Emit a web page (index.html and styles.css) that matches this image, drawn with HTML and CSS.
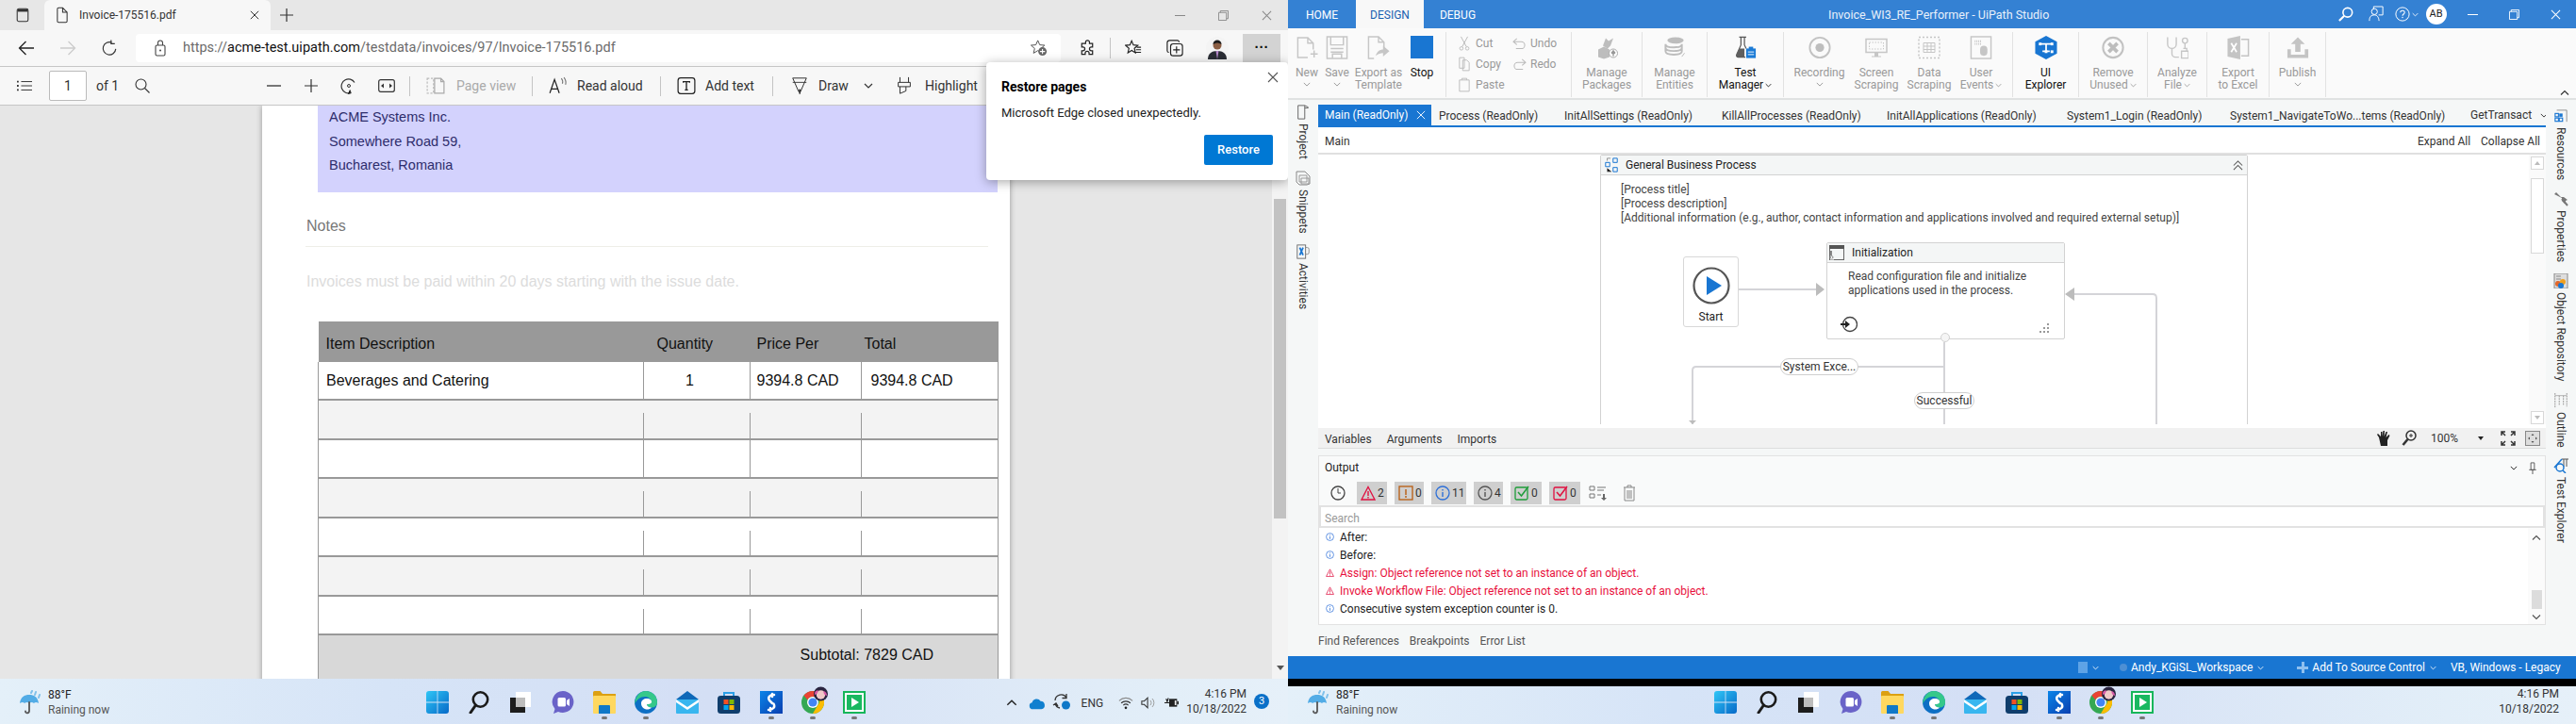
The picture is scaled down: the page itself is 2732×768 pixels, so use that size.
FILE: index.html
```html
<!DOCTYPE html>
<html lang="en">
<head>
<meta charset="utf-8">
<title>Edge and UiPath Studio</title>
<link rel="stylesheet" href="styles.css">
</head>
<body>
<svg class="sprite" aria-hidden="true">
  <defs>
    <linearGradient id="g-win" x1="0" y1="0" x2="1" y2="1"><stop offset="0" stop-color="#2fc6f6"/><stop offset="1" stop-color="#0669c8"/></linearGradient>
    <linearGradient id="g-sbg" x1="0" y1="0" x2="1" y2="1"><stop offset="0" stop-color="#0a84e8"/><stop offset="1" stop-color="#0a3fb0"/></linearGradient>
  </defs>
  <symbol id="win" viewBox="0 0 24 24"><path fill="url(#g-win)" d="M0 3a3 3 0 0 1 3-3h8.6v11.6H0zM12.4 0H21a3 3 0 0 1 3 3v8.6H12.4zM0 12.4h11.6V24H3a3 3 0 0 1-3-3zM12.4 12.4H24V21a3 3 0 0 1-3 3h-8.6z"/></symbol>
  <symbol id="tsearch" viewBox="0 0 24 24"><circle cx="13.5" cy="9" r="7.7" fill="none" stroke="#1b1b1b" stroke-width="2.6"/><path d="M8.5 15 3 23" stroke="#1b1b1b" stroke-width="3" stroke-linecap="round"/></symbol>
  <symbol id="taskview" viewBox="0 0 24 24"><rect x="1" y="7" width="16" height="16" fill="#1d1d1d"/><rect x="7" y="1" width="16" height="16" fill="#fff"/><rect x="7" y="7" width="10" height="10" fill="#bdbdbd"/></symbol>
  <symbol id="teams" viewBox="0 0 24 24"><path fill="#6a63c8" d="M12 0a11.5 11.5 0 1 1-5 21.9L2 24l1.5-5A11.5 11.5 0 0 1 12 0z"/><rect x="6.5" y="7" width="8.5" height="9.5" rx="1.5" fill="#fff"/><path d="m16 10 3-2v8l-3-2z" fill="#fff"/></symbol>
  <symbol id="files" viewBox="0 0 24 24"><path fill="#dca012" d="M0 1.5A1.5 1.5 0 0 1 1.5 0h6L10 3h14v3H0z"/><rect y="5" width="24" height="19" rx="1" fill="#ffd860"/><path fill="#0f78c8" d="M7 15h10a1 1 0 0 1 1 1v8H6v-8a1 1 0 0 1 1-1z"/></symbol>
  <symbol id="edge" viewBox="0 0 24 24"><circle cx="12" cy="12" r="12" fill="#0d6fc4"/><path fill="#35c88a" d="M12 0a12 12 0 0 1 12 12c0 3.500-2.500 5.500-6 5.500-3 0-5-1.500-5-3.500 3 0 4.500-1 4.500-2.800 0-3-3-5.200-6.500-5.200-5 0-9 3.500-11 8C.5 6 5.500 0 12 0z"/><path fill="#fff" d="M7 13c0-3 3-5 6-5 3.500 0 5.500 2 5 4-.5 1.500-2 2-5 2 0 2 2 3.500 5 3.500-1 1.500-3 2-4.500 2C10 19.500 7 17 7 13z"/></symbol>
  <symbol id="mail" viewBox="0 0 24 24"><path fill="#0f68b8" d="M12 0 24 9v3H0V9z"/><rect y="9" width="24" height="15" rx="1" fill="#38b6ef"/><path fill="#fff" d="m0 9 12 8 12-8v3l-12 8L0 12z"/></symbol>
  <symbol id="store" viewBox="0 0 24 24"><path fill="none" stroke="#2ba0e8" stroke-width="2" d="M7 6V2h10v4"/><rect y="5" width="24" height="19" rx="3.500" fill="#0f3d6c"/><rect x="6.500" y="9" width="5" height="5" fill="#f25022"/><rect x="12.500" y="9" width="5" height="5" fill="#7fba00"/><rect x="6.500" y="15" width="5" height="5" fill="#00a4ef"/><rect x="12.500" y="15" width="5" height="5" fill="#ffb900"/></symbol>
  <symbol id="sapp" viewBox="0 0 24 24"><rect width="24" height="24" fill="url(#g-sbg)"/><path fill="none" stroke="#fff" stroke-width="2.500" stroke-linecap="round" d="M15 4C10 4 8 7 10 10l3 3M13 3v3M9 20c5 0 7.500-3 5.500-6.500M11 18v3"/></symbol>
  <symbol id="chrome" viewBox="0 0 24 24"><circle cx="12" cy="12" r="12" fill="#34a853"/><path fill="#ea4335" d="M12 0a12 12 0 0 1 10.400 6H12a6 6 0 0 0-5.600 3.500L2.500 4.700A12 12 0 0 1 12 0z"/><path fill="#fbbc04" d="M22.400 6A12 12 0 0 1 12 24l5.200-9a6 6 0 0 0 0-9z"/><circle cx="12" cy="12" r="6" fill="#fff"/><circle cx="12" cy="12" r="4.600" fill="#4285f4"/></symbol>
  <symbol id="badge" viewBox="0 0 16 16"><circle cx="8" cy="8" r="8" fill="#2a2440"/><circle cx="8" cy="9" r="5" fill="#f1c8c8"/><path fill="#d95aa8" d="M1 9c0-4 2-5 4-5 0 3-2 5-4 5zM15 10c0-3-2-5-4-5 0 3 2 5 4 5z"/></symbol>
  <symbol id="green" viewBox="0 0 24 24"><rect width="24" height="24" fill="#16b65a"/><rect x="2" y="2" width="20" height="20" fill="#fff"/><rect x="4" y="4" width="16" height="16" fill="#19b860"/><path fill="#fff" d="m9 7 8 5-8 5z"/></symbol>
  <symbol id="rain" viewBox="0 0 24 26"><path fill="#52ace6" d="M1 14C2 7 6 5 11 5c5 0 9 2 10 9-2-1.500-4-1.500-5 0-1.500-1.500-3.500-1.500-5 0-1.500-1.500-3.500-1.500-5 0-1-1.500-3-1.500-5 0z"/><path fill="none" stroke="#555" stroke-width="1.800" stroke-linecap="round" d="M11 13v9c0 3-4 3-4 .5"/><path stroke="#7fc0ea" stroke-width="2" stroke-linecap="round" d="M14 1l-1 2M18 2l-1 3M22 5l-1 3"/></symbol>
  <symbol id="cloud" viewBox="0 0 20 14"><path fill="#0f7fcf" d="M5 13.500a4 4 0 0 1-1-7.900A5.500 5.500 0 0 1 14 4a4.800 4.800 0 0 1 1 9.500z"/></symbol>
  <symbol id="sync" viewBox="0 0 20 20"><path fill="none" stroke="#333" stroke-width="1.300" d="M3 9a6.500 6.500 0 0 1 12-3M8 17A6.500 6.500 0 0 1 3 12M15 2v4.500h-4.500M1 14l3-2 2 3"/><circle cx="14.500" cy="14" r="4.500" fill="#0f78c8"/></symbol>
  <symbol id="wifi" viewBox="0 0 18 16"><path fill="none" stroke="#8a8a8a" stroke-width="1.200" d="M1 5.500a11.500 11.500 0 0 1 16 0"/><path fill="none" stroke="#333" stroke-width="1.300" d="M3.500 8.300a8 8 0 0 1 11 0M6 11a4.500 4.500 0 0 1 6 0"/><circle cx="9" cy="14" r="1.500" fill="#222"/></symbol>
  <symbol id="vol" viewBox="0 0 18 16"><path fill="none" stroke="#333" stroke-width="1.200" d="M1 6v4h3l4 4V2L4 6z"/><path fill="none" stroke="#999" stroke-width="1.100" d="M11 5a4 4 0 0 1 0 6M13.500 3a7 7 0 0 1 0 10"/></symbol>
  <symbol id="batt" viewBox="0 0 18 16"><rect x="6" y="3" width="10" height="10" fill="#222"/><rect x="16" y="6" width="2" height="4" fill="#222"/><rect x="13" y="5" width="2" height="6" fill="#eee"/><path stroke="#222" stroke-width="1.400" d="M0 8h6M2 3l2 4M5 2 3 8"/></symbol>
  <symbol id="vtabs" viewBox="0 0 16 18"><rect x="1.500" y="1.500" width="13" height="15" rx="2" fill="none" stroke="#333" stroke-width="1.200"/><path d="M2 2h12v3H2z" fill="#333"/></symbol>
  <symbol id="file" viewBox="0 0 14 20"><path fill="none" stroke="#333" stroke-width="1.200" d="M1 2.500A1.500 1.500 0 0 1 2.500 1h5L13 6.500v11a1.500 1.500 0 0 1-1.500 1.500h-9A1.500 1.500 0 0 1 1 17.500zM7.500 1v5.500H13"/></symbol>
  <symbol id="x" viewBox="0 0 12 12"><path stroke="currentColor" fill="none" stroke-width="1.100" d="M1 1l10 10M11 1 1 11"/></symbol>
  <symbol id="plus" viewBox="0 0 16 16"><path stroke="#333" fill="none" stroke-width="1.200" d="M8 1v14M1 8h14"/></symbol>
  <symbol id="back" viewBox="0 0 18 18"><path stroke="currentColor" fill="none" stroke-width="1.300" d="M17 9H1.500M8.500 2 1.500 9l7 7"/></symbol>
  <symbol id="fwd" viewBox="0 0 18 18"><path stroke="currentColor" fill="none" stroke-width="1.300" d="M1 9h15.500M9.500 2l7 7-7 7"/></symbol>
  <symbol id="reload" viewBox="0 0 18 20"><path stroke="#333" fill="none" stroke-width="1.300" d="M12 3.500A7.500 7.500 0 1 0 16.500 11M11 0.500v4.300h4.400"/></symbol>
  <symbol id="lock" viewBox="0 0 12 18"><rect x="1" y="6" width="10" height="11" rx="1.500" fill="none" stroke="#444" stroke-width="1.100"/><path fill="none" stroke="#444" stroke-width="1.100" d="M3.500 6V3.500a2.500 2.500 0 0 1 5 0V6"/><circle cx="6" cy="11.500" r="1" fill="#444"/></symbol>
  <symbol id="staradd" viewBox="0 0 20 20"><path fill="none" stroke="#555" stroke-width="1.100" d="M8.500 1l2.300 5.200 5.700.5-4.300 3.800 1.300 5.500-5-3-5 3 1.300-5.500L.5 6.700l5.700-.5z"/><circle cx="14" cy="14" r="5" fill="#666"/><path stroke="#fff" stroke-width="1.200" d="M14 11v6M11 14h6"/></symbol>
  <symbol id="ext" viewBox="0 0 20 22"><path fill="none" stroke="#222" stroke-width="1.500" d="M8 3.500a2.500 2.500 0 0 1 5 0V5h4v4.500h-1.500a2.500 2.500 0 0 0 0 5H17V19h-4.500v-1.500a2.500 2.500 0 0 0-5 0V19H3v-4.500h1.500a2.500 2.500 0 0 0 0-5H3V5h5z"/></symbol>
  <symbol id="favs" viewBox="0 0 20 20"><path fill="none" stroke="#222" stroke-width="1.300" d="M8 1.500l2 4.800 5.200.5-4 3.500 1.200 5.200L8 12.800 3.600 15.500l1.200-5.200-4-3.500L6 6.300z"/><path stroke="#222" stroke-width="1.200" d="M14 9h5M13 12h6M12 15h7"/></symbol>
  <symbol id="coll" viewBox="0 0 20 20"><rect x="5" y="5" width="14" height="14" rx="3" fill="none" stroke="#222" stroke-width="1.300"/><path fill="none" stroke="#222" stroke-width="1.300" d="M15 3A2 2 0 0 0 13 1H4a3 3 0 0 0-3 3v9a2 2 0 0 0 2 2M12 8v8M8 12h8"/></symbol>
  <symbol id="avatar" viewBox="0 0 24 24"><circle cx="12" cy="12" r="12" fill="#f4f4f4"/><path fill="#2a2d35" d="M2 24c0-6 4-9 10-9s10 3 10 9z"/><path fill="#b488c8" d="m10.500 15 1.500 9 1.500-9z"/><circle cx="12" cy="9" r="4.500" fill="#8b5e44"/><path fill="#1c1c1c" d="M7.500 8c0-6 9-6 9 0-3-2-6-2-9 0z"/></symbol>
  <symbol id="list" viewBox="0 0 18 14"><path stroke="#333" stroke-width="1.100" d="M5 2h13M5 7h13M5 12h13"/><path stroke="#333" stroke-width="2" stroke-dasharray="2" d="M0 2h2M0 7h2M0 12h2"/></symbol>
  <symbol id="mag" viewBox="0 0 16 16"><circle cx="6.500" cy="6.500" r="5.500" fill="none" stroke="#333" stroke-width="1.100"/><path stroke="#333" stroke-width="1.100" d="m10.500 10.500 5 5"/></symbol>
  <symbol id="rot" viewBox="0 0 18 18"><path fill="none" stroke="#333" stroke-width="1.200" d="M11 16.500A7.500 7.500 0 1 1 15 5.500"/><circle cx="9" cy="9" r="1.500" fill="none" stroke="#333"/><path stroke="#333" stroke-width="1.200" d="m8 17.500 3-1-1-3"/></symbol>
  <symbol id="fit" viewBox="0 0 18 14"><rect x=".7" y=".7" width="16.600" height="12.600" rx="2" fill="none" stroke="#333" stroke-width="1.200"/><path fill="#333" d="M3 7l3-2.500v5zM15 7l-3-2.500v5z"/></symbol>
  <symbol id="pageview" viewBox="0 0 18 18"><path fill="none" stroke="#bbb" stroke-width="1.100" stroke-dasharray="2 1.500" d="M1 2h6v14H1z"/><path fill="none" stroke="#aaa" stroke-width="1.100" d="M8 2h6l3 3v11H8zM14 2v3h3"/></symbol>
  <symbol id="read" viewBox="0 0 18 18"><path fill="none" stroke="#222" stroke-width="1.100" d="m1 16 4.500-13L10 16M2.500 12h6"/><path fill="none" stroke="#777" stroke-width="1" d="M12 2a5 5 0 0 1 1 5M14.500 1a8 8 0 0 1 1.500 7"/></symbol>
  <symbol id="addt" viewBox="0 0 18 18"><rect x="1" y="1.500" width="16" height="15" rx="2.500" fill="none" stroke="#222" stroke-width="1.100"/><path fill="none" stroke="#222" stroke-width="1.200" d="M6 6V5h6v1M9 5v8M7.500 13h3"/></symbol>
  <symbol id="draw" viewBox="0 0 18 22"><path fill="none" stroke="#333" stroke-width="1.100" d="M1 2h16L10 18H8z"/><path fill="#333" d="M8 15h2.500L10 20.500H8.500z"/><path stroke="#333" d="M1 7h16"/></symbol>
  <symbol id="high" viewBox="0 0 16 22"><path fill="none" stroke="#333" stroke-width="1.100" d="M3 1v6M13 1v6M1 7h14v5H1zM3 12v8l7-3v-5"/></symbol>
  <symbol id="chev" viewBox="0 0 10 6"><path fill="none" stroke="currentColor" stroke-width="1.200" d="m1 1 4 4 4-4"/></symbol>
  <symbol id="chevup" viewBox="0 0 10 6"><path fill="none" stroke="currentColor" stroke-width="1.200" d="m1 5 4-4 4 4"/></symbol>
  <symbol id="r-new" viewBox="0 0 24 26"><path fill="none" stroke="#c6c6c6" stroke-width="1.500" d="M13 24H2V2h11l6 6v7M13 2v6h6M16 20h8M20 16v8"/></symbol>
  <symbol id="r-save" viewBox="0 0 24 26"><path fill="none" stroke="#c6c6c6" stroke-width="1.500" d="M1 1h22v24H1zM5 1v9h14V1M5 14h14M5 18h14M7 25v-5h10v5"/></symbol>
  <symbol id="r-exp" viewBox="0 0 24 26"><path fill="none" stroke="#c6c6c6" stroke-width="1.500" d="M7 25H1V1h11l6 6v6M12 1v6h6"/><path fill="#c6c6c6" d="M9 22c1-5 5-7 8-7v-4l7 6-7 6v-4c-3 0-5 1-8 3z"/></symbol>
  <symbol id="r-cut" viewBox="0 0 12 18"><path fill="none" stroke="#bbb" stroke-width="1.100" d="M2 1l6.500 12M10 1 3.500 13"/><circle cx="2.500" cy="15" r="2" fill="none" stroke="#bbb"/><circle cx="9.500" cy="15" r="2" fill="none" stroke="#bbb"/></symbol>
  <symbol id="r-copy" viewBox="0 0 14 18"><path fill="none" stroke="#bbb" stroke-width="1.100" d="M1 1h6v13H1zM5 4h5l3 3v10H5z"/></symbol>
  <symbol id="r-paste" viewBox="0 0 14 18"><path fill="none" stroke="#bbb" stroke-width="1.100" d="M1 3h12v14H1zM4 3V1h6v2"/></symbol>
  <symbol id="r-undo" viewBox="0 0 16 14"><path fill="none" stroke="#bbb" stroke-width="1.100" d="M5 1 1 4.500 5 8M1 4.500h9a4 4 0 0 1 0 8H4"/></symbol>
  <symbol id="r-redo" viewBox="0 0 16 14"><path fill="none" stroke="#bbb" stroke-width="1.100" d="M11 1l4 3.500L11 8M15 4.500H6a4 4 0 0 0 0 8h6"/></symbol>
  <symbol id="r-pkg" viewBox="0 0 24 24"><path fill="#bdbdbd" d="M3 14l6-3 6 3v8l-6 2-6-2zM8 10l3-8 3 3 5-3-3 8-3 3z"/><circle cx="19" cy="18" r="4.500" fill="#fff" stroke="#aaa"/><path stroke="#999" stroke-width="1.500" d="M19 21v-5M17 18l2-2.500 2 2.500"/></symbol>
  <symbol id="r-db" viewBox="0 0 24 26"><ellipse cx="13" cy="5" rx="9" ry="3.500" fill="#bdbdbd"/><path fill="none" stroke="#bdbdbd" stroke-width="2" d="M2 9c0 5 18 5 18 0M2 13c0 5 18 5 18 0M2 17c0 5 18 5 18 0M2 9v8M20 9v8"/><path stroke="#bbb" d="m20 23 3-4"/></symbol>
  <symbol id="r-flask" viewBox="0 0 26 26"><path fill="none" stroke="#555" stroke-width="1.300" d="M6 1h8M8 1v9L3 21c-.5 2 .5 3 2 3h8"/><path fill="#5f5f5f" d="M6 14h6v10H5c-2 0-3-1-2-3z"/><path fill="none" stroke="#555" stroke-width="1.300" d="M12 1v9l2 4"/><rect x="14" y="14" width="11" height="11" fill="#1b7bd6"/><path stroke="#fff" d="M16 18h7M16 21h7"/><rect x="17" y="12" width="5" height="3" fill="#1b7bd6"/></symbol>
  <symbol id="r-rec" viewBox="0 0 26 26"><circle cx="13" cy="13" r="11.500" fill="none" stroke="#c2c2c2" stroke-width="2"/><circle cx="13" cy="13" r="5" fill="#bdbdbd"/></symbol>
  <symbol id="r-screen" viewBox="0 0 24 24"><rect x="1" y="3" width="22" height="14" fill="none" stroke="#c6c6c6" stroke-width="1.500"/><rect x="4.500" y="6.500" width="15" height="7" fill="none" stroke="#c6c6c6" stroke-dasharray="1.500"/><path fill="#c6c6c6" d="M10 17h4v4h3v1H7v-1h3z"/></symbol>
  <symbol id="r-data" viewBox="0 0 24 24"><rect x="1" y="1" width="22" height="22" fill="none" stroke="#c6c6c6" stroke-width="1.500" stroke-dasharray="2"/><path fill="none" stroke="#c6c6c6" d="M6 7h12v10H6zM6 10.500h12M6 14h12M10 7v10M14 7v10"/></symbol>
  <symbol id="r-user" viewBox="0 0 24 26"><rect x="1" y="1" width="22" height="24" fill="none" stroke="#c6c6c6" stroke-width="1.500"/><rect x="11" y="11" width="8" height="11" rx="4" fill="#c6c6c6"/><path stroke="#c6c6c6" stroke-width="2" stroke-dasharray="1 1" d="M5 6h7M5 9h7"/></symbol>
  <symbol id="r-ui" viewBox="0 0 24 26"><path fill="#1976d2" d="M12 0 24 6.500v13L12 26 0 19.500v-13z"/><path stroke="#fff" stroke-width="1.800" fill="none" d="M5 9h14M12 9v8M8 17h8"/><rect x="4" y="7.500" width="3" height="3" fill="#fff"/><rect x="17" y="7.500" width="3" height="3" fill="#fff"/><rect x="10.500" y="16" width="3" height="3" fill="#fff"/><rect x="17" y="16" width="3" height="3" fill="#fff"/></symbol>
  <symbol id="r-rem" viewBox="0 0 26 26"><circle cx="13" cy="13" r="11.500" fill="none" stroke="#c2c2c2" stroke-width="2.200"/><path stroke="#bdbdbd" stroke-width="4" d="m8 8 10 10M18 8 8 18"/></symbol>
  <symbol id="r-an" viewBox="0 0 26 26"><path fill="none" stroke="#c6c6c6" stroke-width="1.500" d="M2 1v8a5 5 0 0 0 10 0V1M7 14v6a4 4 0 0 0 4 4h4M22 8v6"/><circle cx="22" cy="5" r="3" fill="none" stroke="#c6c6c6" stroke-width="1.500"/><path fill="none" stroke="#c6c6c6" stroke-width="1.500" d="M18 17h8v8h-8zM20 14h4v3"/></symbol>
  <symbol id="r-xl" viewBox="0 0 24 26"><path fill="#c4c4c4" d="M0 3 14 0v26L0 23z"/><path fill="none" stroke="#c4c4c4" stroke-width="1.600" d="M15 4h8v18h-8"/><path stroke="#fff" stroke-width="1.800" d="m4 8 6 10M10 8 4 18"/></symbol>
  <symbol id="r-pub" viewBox="0 0 26 24"><path fill="#c4c4c4" d="M13 0 21 8h-5v9h-6V8H5zM1 14h4v6h16v-6h4v10H1z"/></symbol>
  <symbol id="t-search" viewBox="0 0 18 18"><circle cx="11" cy="7" r="5.500" fill="none" stroke="#fff" stroke-width="1.800"/><path stroke="#fff" stroke-width="2.400" d="m7 11-6 6"/></symbol>
  <symbol id="t-feed" viewBox="0 0 18 20"><path fill="none" stroke="#fff" stroke-width="1.100" d="M6 4V1h11v10h-5"/><circle cx="7" cy="7" r="3.500" fill="none" stroke="#fff" stroke-width="1.100"/><path fill="none" stroke="#fff" stroke-width="1.100" d="M1 18c0-5 2-7 6-7 3 0 5 2 5.500 7"/></symbol>
  <symbol id="t-help" viewBox="0 0 18 18"><circle cx="9" cy="9" r="8" fill="none" stroke="#fff" stroke-width="1.100"/><path fill="none" stroke="#fff" stroke-width="1.200" d="M6.500 7c0-3 5-3 5 0 0 2-2.500 2-2.500 4"/><circle cx="9" cy="13" r=".8" fill="#fff"/></symbol>
  <symbol id="t-max" viewBox="0 0 12 12"><path fill="none" stroke="currentColor" d="M.5 2.500h9v9h-9zM2.500 2.500v-2h9v9h-2"/></symbol>
  <symbol id="s-proj" viewBox="0 0 14 18"><path fill="none" stroke="#666" stroke-width="1.100" d="M1 1h8v16H1zM9 1l4 2v1H9"/></symbol>
  <symbol id="s-snip" viewBox="0 0 16 16"><path fill="none" stroke="#888" d="M1 1h9l5 5v8l-3 1H4L1 12z"/><path fill="none" stroke="#999" d="M4 5h8v7H4zM6 8h8v6H6z"/></symbol>
  <symbol id="s-act" viewBox="0 0 16 18"><rect x="1" y="1" width="10" height="16" fill="none" stroke="#666"/><path stroke="#1976d2" stroke-width="2" d="M4 4l4 9M8 4l-4 9"/><path fill="none" stroke="#888" d="M11 4h2a2 2 0 0 1 2 2v4a2 2 0 0 1-2 2h-2"/></symbol>
  <symbol id="s-res" viewBox="0 0 16 16"><path fill="none" stroke="#888" d="M3 1h12v14"/><rect x="1" y="5" width="4" height="4" fill="none" stroke="#1976d2" stroke-width="1.300"/><rect x="6" y="5" width="4" height="4" fill="#1976d2"/><rect x="1" y="10.500" width="4" height="4" fill="none" stroke="#1976d2" stroke-width="1.300"/><rect x="6" y="10.500" width="4" height="4" fill="none" stroke="#1976d2" stroke-width="1.300"/></symbol>
  <symbol id="s-prop" viewBox="0 0 16 16"><path fill="#777" d="M1 3l2-2 5 5 3 0 4 3-2 1-1 3-3-3 0-3z"/><path stroke="#777" stroke-width="2" d="M9 8l6 7"/></symbol>
  <symbol id="s-obj" viewBox="0 0 16 16"><rect x="1" y="0" width="14" height="16" fill="#ddd" stroke="#888"/><path stroke="#888" d="M3 3h5M3 6h5M3 9h2"/><circle cx="5" cy="11" r="3" fill="#e5682a"/><circle cx="10" cy="9" r="3" fill="#f0a020"/><circle cx="8" cy="13" r="3" fill="#1976d2"/></symbol>
  <symbol id="s-out" viewBox="0 0 16 18"><path stroke="#888" stroke-dasharray="2 1" d="M1 0v18M6 3v12M11 3v12M15 0v16"/><path stroke="#aaa" d="M1 3h14"/></symbol>
  <symbol id="s-test" viewBox="0 0 16 16"><path fill="none" stroke="#555" d="M9 1h7M11 1v8M14 1v8"/><circle cx="7" cy="10" r="4" fill="none" stroke="#1976d2" stroke-width="1.500"/><path stroke="#1976d2" stroke-width="1.500" d="m10 13 3 3M9 1 1 10"/></symbol>
  <symbol id="f-seq" viewBox="0 0 16 18"><path fill="none" stroke="#1976d2" stroke-width="1.100" d="M10 1h5v5h-5zM1 6h5v5H1zM10 12h5v5h-5z"/><path stroke="#888" d="M3 1v3M3 1h4M3 13v4h5"/></symbol>
  <symbol id="f-init" viewBox="0 0 16 16"><rect x=".5" y=".5" width="15" height="15" fill="none" stroke="#666"/><rect width="16" height="4" fill="#555"/><rect x="1" y="6" width="2" height="5" fill="#888"/><circle cx="2.500" cy="13" r="1.500" fill="none" stroke="#888"/><path stroke="#fff" d="M1 15h4"/></symbol>
  <symbol id="f-entry" viewBox="0 0 18 18"><circle cx="10" cy="9" r="7.500" fill="none" stroke="#444" stroke-width="1.300"/><path fill="#222" d="M0 8h5V5l5 4-5 4v-3H0z"/></symbol>
  <symbol id="f-hand" viewBox="0 0 16 18"><path fill="#222" d="M3 8 1 5l1-1 3 3V2h1.500v5l1-6H9l-.5 6 2-5H12l-1.500 6 3-3 1 1-2.500 5v6H5z"/></symbol>
  <symbol id="f-zoom" viewBox="0 0 16 18"><circle cx="10" cy="6" r="5" fill="none" stroke="#333" stroke-width="1.500"/><path stroke="#333" d="M10 4v4M8 6h4"/><path stroke="#333" stroke-width="2.600" d="m6.500 10-5 6"/></symbol>
  <symbol id="f-fit" viewBox="0 0 16 16"><path fill="none" stroke="#333" stroke-width="1.500" d="M1 5V1h4M11 1h4v4M15 11v4h-4M5 15H1v-4M1 1l4 4M15 1l-4 4M15 15l-4-4M1 15l4-4"/></symbol>
  <symbol id="f-over" viewBox="0 0 16 16"><rect x=".5" y=".5" width="15" height="15" fill="#ddd" stroke="#888"/><path fill="#555" d="m8 3 1.500 2h-3zM8 13l-1.500-2h3zM3 8l2-1.500v3zM13 8l-2 1.500v-3z"/></symbol>
  <symbol id="f-coll" viewBox="0 0 12 12"><path fill="none" stroke="#555" stroke-width="1.100" d="m1 6 5-5 5 5M1 11l5-5 5 5"/></symbol>
  <symbol id="f-grip" viewBox="0 0 10 10"><path fill="#999" d="M8 0h2v2H8zM8 4h2v2H8zM4 4h2v2H4zM8 8h2v2H8zM4 8h2v2H4zM0 8h2v2H0z"/></symbol>
  <symbol id="o-clock" viewBox="0 0 16 16"><circle cx="8" cy="8" r="7" fill="none" stroke="#444" stroke-width="1.300"/><path fill="none" stroke="#444" d="M8 3v5h3"/></symbol>
  <symbol id="o-err" viewBox="0 0 16 16"><path fill="none" stroke="#e01040" stroke-width="1.300" d="M8 1.500 15 15H1z"/><path stroke="#e01040" stroke-width="1.400" d="M8 6v5M8 12v1.500"/></symbol>
  <symbol id="o-warn" viewBox="0 0 16 16"><rect x="1" y="1" width="14" height="14" fill="none" stroke="#b95c10" stroke-width="1.300"/><path stroke="#b95c10" stroke-width="1.400" d="M8 4v6M8 11v2"/></symbol>
  <symbol id="o-info" viewBox="0 0 16 16"><circle cx="8" cy="8" r="7" fill="none" stroke="#2e70d8" stroke-width="1.300"/><path stroke="#2e70d8" stroke-width="1.400" d="M8 7v5M8 4v1.500"/></symbol>
  <symbol id="o-trace" viewBox="0 0 16 16"><circle cx="8" cy="8" r="7" fill="none" stroke="#555" stroke-width="1.300"/><path stroke="#555" stroke-width="1.400" d="M8 7v5M8 4v1.500"/></symbol>
  <symbol id="o-ok" viewBox="0 0 16 16"><rect x="1" y="2" width="13" height="13" rx="1.500" fill="none" stroke="#1f9d3a" stroke-width="1.300"/><path fill="none" stroke="#1f9d3a" stroke-width="1.500" d="m4 7 3.500 4L15 1"/></symbol>
  <symbol id="o-bad" viewBox="0 0 16 16"><rect x="1" y="2" width="13" height="13" rx="1.500" fill="none" stroke="#e01040" stroke-width="1.300"/><path fill="none" stroke="#e01040" stroke-width="1.500" d="m4 7 3.500 4L15 1"/></symbol>
  <symbol id="o-list" viewBox="0 0 20 16"><path fill="none" stroke="#777" d="M1 1h5v4H1zM1 9h5v4H1z"/><path stroke="#777" d="M9 2h9M9 5h7M9 10h4"/><path fill="#666" d="M15 9h2v4h2l-3 3-3-3h2z"/></symbol>
  <symbol id="o-trash" viewBox="0 0 14 18"><path fill="none" stroke="#888" d="M1 3h12M5 3V1h4v2M2 3v14h10V3M5 6v9M7 6v9M9 6v9"/></symbol>
  <symbol id="o-pin" viewBox="0 0 8 14"><path fill="none" stroke="#555" d="M2 1h4v8H2zM0 9h8M4 9v5"/></symbol>
</svg>

<div class="screen">
  <section class="browser">
    <div class="tabstrip">
      <svg class="ic i16 vt-ic"><use href="#vtabs"/></svg>
      <div class="b-tab">
        <svg class="ic i-file"><use href="#file"/></svg>
        <span class="b-tab-title">Invoice-175516.pdf</span>
        <svg class="ic i10 b-tab-x"><use href="#x"/></svg>
      </div>
      <svg class="ic i16 b-new"><use href="#plus"/></svg>
      <div class="winctl dark">
        <span class="wc-min"></span>
        <svg class="ic i11"><use href="#t-max"/></svg>
        <svg class="ic i11"><use href="#x"/></svg>
      </div>
    </div>
    <div class="addr">
      <div class="nav"><svg class="ic i18 nav-on"><use href="#back"/></svg></div>
      <div class="nav"><svg class="ic i18 nav-off"><use href="#fwd"/></svg></div>
      <div class="nav"><svg class="ic i18"><use href="#reload"/></svg></div>
      <div class="urlbox">
        <svg class="ic i-lock"><use href="#lock"/></svg>
        <span class="url"><span class="url-dim">https://</span>acme-test.uipath.com<span class="url-dim">/testdata/invoices/97/Invoice-175516.pdf</span></span>
        <svg class="ic i18 url-star"><use href="#staradd"/></svg>
      </div>
      <div class="ab ab-ext"><svg class="ic i18"><use href="#ext"/></svg></div>
      <span class="vsep"></span>
      <div class="ab ab-fav"><svg class="ic i18"><use href="#favs"/></svg></div>
      <div class="ab"><svg class="ic i18"><use href="#coll"/></svg></div>
      <div class="ab-av"><svg class="ic i24"><use href="#avatar"/></svg></div>
      <div class="ab-more">···</div>
    </div>
    <div class="pdfbar">
      <div class="pb-list"><svg class="ic i16"><use href="#list"/></svg></div>
      <div class="pb-page">1</div>
      <span class="pb-of">of 1</span>
      <div class="pb-cell pb-find"><svg class="ic i16"><use href="#mag"/></svg></div>
      <div class="pb-cell pb-zoom"><span class="pb-minus"></span></div>
      <div class="pb-cell"><svg class="ic i16"><use href="#plus"/></svg></div>
      <div class="pb-cell"><svg class="ic i18"><use href="#rot"/></svg></div>
      <div class="pb-cell"><svg class="ic i18"><use href="#fit"/></svg></div>
      <span class="vsep sep-a"></span>
      <svg class="ic tool t-page"><use href="#pageview"/></svg>
      <span class="pb-lbl lbl-page">Page view</span>
      <span class="vsep sep-b"></span>
      <svg class="ic tool t-read"><use href="#read"/></svg>
      <span class="pb-lbl lbl-read">Read aloud</span>
      <span class="vsep sep-c"></span>
      <svg class="ic tool t-add"><use href="#addt"/></svg>
      <span class="pb-lbl lbl-add">Add text</span>
      <span class="vsep sep-d"></span>
      <svg class="ic tool t-draw"><use href="#draw"/></svg>
      <span class="pb-lbl lbl-draw">Draw</span>
      <svg class="ic i10 t-chev"><use href="#chev"/></svg>
      <svg class="ic tool t-high"><use href="#high"/></svg>
      <span class="pb-lbl lbl-high">Highlight</span>
    </div>
    <div class="viewer">
      <article class="page">
        <div class="addrbox">
          <p>ACME Systems Inc.</p>
          <p>Somewhere Road 59,</p>
          <p>Bucharest, Romania</p>
        </div>
        <h2 class="notes">Notes</h2>
        <p class="terms">Invoices must be paid within 20 days starting with the issue date.</p>
        <table class="inv">
          <colgroup><col class="c1"><col class="c2"><col class="c3"><col class="c4"></colgroup>
          <thead>
            <tr><th>Item Description</th><th class="th-q">Quantity</th><th>Price Per</th><th class="th-t">Total</th></tr>
          </thead>
          <tbody>
            <tr class="full h40"><td>Beverages and Catering</td><td class="qty">1</td><td>9394.8 CAD</td><td class="tot">9394.8 CAD</td></tr>
            <tr class="alt cut h42"><td></td><td></td><td></td><td></td></tr>
            <tr class="full h41"><td></td><td></td><td></td><td></td></tr>
            <tr class="alt cut h42"><td></td><td></td><td></td><td></td></tr>
            <tr class="cut h41"><td></td><td></td><td></td><td></td></tr>
            <tr class="alt cut h42"><td></td><td></td><td></td><td></td></tr>
            <tr class="cut h41"><td></td><td></td><td></td><td></td></tr>
            <tr class="sub"><td colspan="4">Subtotal: 7829 CAD</td></tr>
          </tbody>
        </table>
      </article>
      <div class="vscroll">
        <span class="vs-thumb"></span>
        <span class="vs-down"></span>
      </div>
    </div>
  </section>

  <aside class="popup">
    <svg class="ic i12 popup-x"><use href="#x"/></svg>
    <h3>Restore pages</h3>
    <p>Microsoft Edge closed unexpectedly.</p>
    <div class="popup-act"><span class="btn">Restore</span></div>
  </aside>

  <footer class="taskbar tall">
    <div class="weather">
      <svg class="ic i-rain"><use href="#rain"/></svg>
      <div class="w-txt"><div>88°F</div><div class="w-sub">Raining now</div></div>
    </div>
    <div class="apps">
      <div class="app"><svg class="ic i24"><use href="#win"/></svg></div>
      <div class="app"><svg class="ic i24"><use href="#tsearch"/></svg></div>
      <div class="app"><svg class="ic i24"><use href="#taskview"/></svg></div>
      <div class="app"><svg class="ic i24"><use href="#teams"/></svg></div>
      <div class="app on"><svg class="ic i24"><use href="#files"/></svg></div>
      <div class="app on"><svg class="ic i24"><use href="#edge"/></svg></div>
      <div class="app"><svg class="ic i24"><use href="#mail"/></svg></div>
      <div class="app"><svg class="ic i24"><use href="#store"/></svg></div>
      <div class="app on"><svg class="ic i24"><use href="#sapp"/></svg></div>
      <div class="app on"><svg class="ic i24"><use href="#chrome"/></svg><svg class="ic app-badge"><use href="#badge"/></svg></div>
      <div class="app on"><svg class="ic i24"><use href="#green"/></svg></div>
    </div>
    <div class="tray">
      <svg class="ic tr-chev"><use href="#chevup"/></svg>
      <svg class="ic tr-cloud"><use href="#cloud"/></svg>
      <svg class="ic tr-sync"><use href="#sync"/></svg>
      <span class="tr-eng">ENG</span>
      <svg class="ic tr-wifi"><use href="#wifi"/></svg>
      <svg class="ic tr-vol"><use href="#vol"/></svg>
      <svg class="ic tr-batt"><use href="#batt"/></svg>
      <div class="clock"><div>4:16 PM</div><div>10/18/2022</div></div>
      <span class="notif">3</span>
    </div>
  </footer>
</div>

<div class="screen">
  <section class="studio">
    <header class="s-title">
      <nav class="s-menu">
        <span class="s-m">HOME</span>
        <span class="s-m active">DESIGN</span>
        <span class="s-m">DEBUG</span>
      </nav>
      <span class="s-name">Invoice_WI3_RE_Performer - UiPath Studio</span>
      <div class="s-right">
        <svg class="ic i16"><use href="#t-search"/></svg>
        <svg class="ic i-feed"><use href="#t-feed"/></svg>
        <svg class="ic i16 i-help"><use href="#t-help"/></svg>
        <svg class="ic i8 i-hchev"><use href="#chev"/></svg>
        <span class="s-av">AB</span>
        <span class="wc-min s-min"></span>
        <svg class="ic i11 s-max"><use href="#t-max"/></svg>
        <svg class="ic i11 s-close"><use href="#x"/></svg>
      </div>
    </header>

    <div class="ribbon">
      <div class="rg g-file">
        <div class="rb w32"><svg class="ic r"><use href="#r-new"/></svg><span>New</span><svg class="ic i8"><use href="#chev"/></svg></div>
        <div class="rb w32"><svg class="ic r"><use href="#r-save"/></svg><span>Save</span><svg class="ic i8"><use href="#chev"/></svg></div>
        <div class="rb w56"><svg class="ic r"><use href="#r-exp"/></svg><span>Export as<br>Template</span></div>
        <div class="rb w36 dark"><span class="stop"></span><span>Stop</span></div>
      </div>
      <div class="rg g-edit">
        <div class="re-col">
          <span class="re"><svg class="ic i-r"><use href="#r-cut"/></svg>Cut</span>
          <span class="re"><svg class="ic i-r"><use href="#r-copy"/></svg>Copy</span>
          <span class="re"><svg class="ic i-r"><use href="#r-paste"/></svg>Paste</span>
        </div>
        <div class="re-col re-col2">
          <span class="re"><svg class="ic i-r2"><use href="#r-undo"/></svg>Undo</span>
          <span class="re"><svg class="ic i-r2"><use href="#r-redo"/></svg>Redo</span>
        </div>
      </div>
      <div class="rg"><div class="rb w74"><svg class="ic r"><use href="#r-pkg"/></svg><span>Manage<br>Packages</span></div></div>
      <div class="rg"><div class="rb w68"><svg class="ic r"><use href="#r-db"/></svg><span>Manage<br>Entities</span></div></div>
      <div class="rg"><div class="rb w80 dark"><svg class="ic r"><use href="#r-flask"/></svg><span>Test<br>Manager<svg class="ic i7"><use href="#chev"/></svg></span></div></div>
      <div class="rg g-rec">
        <div class="rb w75"><svg class="ic r"><use href="#r-rec"/></svg><span>Recording</span><svg class="ic i8"><use href="#chev"/></svg></div>
        <div class="rb w46"><svg class="ic r"><use href="#r-screen"/></svg><span>Screen<br>Scraping</span></div>
        <div class="rb w66"><svg class="ic r"><use href="#r-data"/></svg><span>Data<br>Scraping</span></div>
        <div class="rb w44"><svg class="ic r"><use href="#r-user"/></svg><span>User<br>Events<svg class="ic i7"><use href="#chev"/></svg></span></div>
      </div>
      <div class="rg"><div class="rb w69 dark"><svg class="ic r"><use href="#r-ui"/></svg><span>UI<br>Explorer</span></div></div>
      <div class="rg"><div class="rb w72"><svg class="ic r"><use href="#r-rem"/></svg><span>Remove<br>Unused<svg class="ic i7"><use href="#chev"/></svg></span></div></div>
      <div class="rg"><div class="rb w62"><svg class="ic r"><use href="#r-an"/></svg><span>Analyze<br>File<svg class="ic i7"><use href="#chev"/></svg></span></div></div>
      <div class="rg"><div class="rb w65"><svg class="ic r"><use href="#r-xl"/></svg><span>Export<br>to Excel</span></div></div>
      <div class="rg"><div class="rb w59"><svg class="ic r"><use href="#r-pub"/></svg><span>Publish</span><svg class="ic i8"><use href="#chev"/></svg></div></div>
      <svg class="ic i10 r-collapse"><use href="#chevup"/></svg>
    </div>

    <div class="s-body">
      <aside class="rail">
        <div class="rail-i"><svg class="ic i14"><use href="#s-proj"/></svg><span>Project</span></div>
        <div class="rail-i"><svg class="ic i16"><use href="#s-snip"/></svg><span>Snippets</span></div>
        <div class="rail-i"><svg class="ic i16"><use href="#s-act"/></svg><span>Activities</span></div>
      </aside>

      <main class="center">
        <div class="tabs">
          <div class="tab active"><span>Main (ReadOnly)</span><svg class="ic i10"><use href="#x"/></svg></div>
          <div class="tab second">Process (ReadOnly)</div>
          <div class="tab">InitAllSettings (ReadOnly)</div>
          <div class="tab">KillAllProcesses (ReadOnly)</div>
          <div class="tab">InitAllApplications (ReadOnly)</div>
          <div class="tab">System1_Login (ReadOnly)</div>
          <div class="tab">System1_NavigateToWo...tems (ReadOnly)</div>
          <div class="tab last"><span>GetTransact</span><svg class="ic i8"><use href="#chev"/></svg></div>
        </div>
        <div class="crumb"><span>Main</span><span class="crumb-r"><span>Expand All</span><span>Collapse All</span></span></div>

        <div class="canvas">
          <div class="flow">
            <div class="seq">
              <div class="seq-h"><svg class="ic i16"><use href="#f-seq"/></svg><span>General Business Process</span><svg class="ic i11 seq-c"><use href="#f-coll"/></svg></div>
              <div class="seq-d">[Process title]<br>[Process description]<br>[Additional information (e.g., author, contact information and applications involved and required external setup)]</div>
            </div>
            <svg class="edges" viewBox="0 0 1302 286">
              <path d="M445 143h85M802 148h83q4 0 4 4v134M664 199v87M397 286V229q0-4 4-4h263" fill="none" stroke="#d4d4d8" stroke-width="2"/>
              <path fill="#bcbcbc" d="m528 136 9 7-9 7zM802 141l-10 7 10 7zM393 282h8l-4 4z"/>
            </svg>
            <div class="start">
              <svg class="play" viewBox="0 0 40 40"><circle cx="20" cy="20" r="18.500" fill="#fff" stroke="#555" stroke-width="2.200"/><path fill="#1976d2" d="M15 10l16 10-16 10z"/></svg>
              <span>Start</span>
            </div>
            <div class="init">
              <div class="init-h"><svg class="ic i16"><use href="#f-init"/></svg><span>Initialization</span></div>
              <div class="init-b">Read configuration file and initialize<br>applications used in the process.</div>
              <div class="init-f"><svg class="ic i-entry"><use href="#f-entry"/></svg><svg class="ic i10"><use href="#f-grip"/></svg></div>
              <span class="port"></span>
            </div>
            <span class="pill pill-a">System Exce...</span>
            <span class="pill pill-b">Successful</span>
          </div>
          <div class="cv-sb">
            <span class="cv-btn"><i class="tri up"></i></span>
            <span class="cv-thumb"></span>
            <span class="cv-btn cv-dn"><i class="tri"></i></span>
          </div>
        </div>

        <div class="varbar">
          <span>Variables</span><span>Arguments</span><span>Imports</span>
          <div class="var-r">
            <svg class="ic i18 v-hand"><use href="#f-hand"/></svg>
            <svg class="ic i18 v-zoom"><use href="#f-zoom"/></svg>
            <span class="v-pct">100%</span>
            <i class="tri v-dd"></i>
            <svg class="ic i16 v-fit"><use href="#f-fit"/></svg>
            <svg class="ic i16 v-over"><use href="#f-over"/></svg>
          </div>
        </div>

        <section class="output">
          <div class="o-head"><span>Output</span><span class="o-grip"></span><svg class="ic i8 o-chev"><use href="#chev"/></svg><svg class="ic o-pin"><use href="#o-pin"/></svg></div>
          <div class="o-filters">
            <svg class="ic i16 o-clock"><use href="#o-clock"/></svg>
            <span class="o-f w32x"><svg class="ic i16"><use href="#o-err"/></svg>2</span>
            <span class="o-f w31x"><svg class="ic i16"><use href="#o-warn"/></svg>0</span>
            <span class="o-f w37x"><svg class="ic i16"><use href="#o-info"/></svg>11</span>
            <span class="o-f w31x"><svg class="ic i16"><use href="#o-trace"/></svg>4</span>
            <span class="o-f w33x"><svg class="ic i16"><use href="#o-ok"/></svg>0</span>
            <span class="o-f w33x"><svg class="ic i16"><use href="#o-bad"/></svg>0</span>
            <svg class="ic i-olist"><use href="#o-list"/></svg>
            <svg class="ic i-otrash"><use href="#o-trash"/></svg>
          </div>
          <div class="o-search">Search</div>
          <div class="o-logs">
            <ul>
              <li><svg class="ic i9"><use href="#o-info"/></svg>After:</li>
              <li><svg class="ic i9"><use href="#o-info"/></svg>Before:</li>
              <li class="err"><svg class="ic i9"><use href="#o-err"/></svg>Assign: Object reference not set to an instance of an object.</li>
              <li class="err"><svg class="ic i9"><use href="#o-err"/></svg>Invoke Workflow File: Object reference not set to an instance of an object.</li>
              <li><svg class="ic i9"><use href="#o-info"/></svg>Consecutive system exception counter is 0.</li>
            </ul>
            <div class="o-sb">
              <svg class="ic i10"><use href="#chevup"/></svg>
              <span class="o-thumb"></span>
              <svg class="ic i10"><use href="#chev"/></svg>
            </div>
          </div>
        </section>
        <div class="btabs"><span>Find References</span><span>Breakpoints</span><span>Error List</span></div>
      </main>

      <aside class="rail rail-r">
        <div class="rail-i"><svg class="ic i14"><use href="#s-res"/></svg><span>Resources</span></div>
        <div class="rail-i"><svg class="ic i16"><use href="#s-prop"/></svg><span>Properties</span></div>
        <div class="rail-i"><svg class="ic i16"><use href="#s-obj"/></svg><span>Object Repository</span></div>
        <div class="rail-i"><svg class="ic i16"><use href="#s-out"/></svg><span>Outline</span></div>
        <div class="rail-i"><svg class="ic i16"><use href="#s-test"/></svg><span>Test Explorer</span></div>
      </aside>
    </div>

    <footer class="status">
      <span class="st-box"></span><svg class="ic i7"><use href="#chev"/></svg>
      <span class="st-dot"></span><span class="st-ws">Andy_KGiSL_Workspace</span><svg class="ic i7"><use href="#chev"/></svg>
      <span class="st-plus"></span><span>Add To Source Control</span><svg class="ic i7"><use href="#chev"/></svg>
      <span class="st-vb">VB, Windows - Legacy</span>
    </footer>
  </section>

  <div class="blackbar"></div>

  <footer class="taskbar">
    <div class="weather">
      <svg class="ic i-rain"><use href="#rain"/></svg>
      <div class="w-txt"><div>88°F</div><div class="w-sub">Raining now</div></div>
    </div>
    <div class="apps">
      <div class="app"><svg class="ic i24"><use href="#win"/></svg></div>
      <div class="app"><svg class="ic i24"><use href="#tsearch"/></svg></div>
      <div class="app"><svg class="ic i24"><use href="#taskview"/></svg></div>
      <div class="app"><svg class="ic i24"><use href="#teams"/></svg></div>
      <div class="app on"><svg class="ic i24"><use href="#files"/></svg></div>
      <div class="app on"><svg class="ic i24"><use href="#edge"/></svg></div>
      <div class="app"><svg class="ic i24"><use href="#mail"/></svg></div>
      <div class="app"><svg class="ic i24"><use href="#store"/></svg></div>
      <div class="app on"><svg class="ic i24"><use href="#sapp"/></svg></div>
      <div class="app on"><svg class="ic i24"><use href="#chrome"/></svg><svg class="ic app-badge"><use href="#badge"/></svg></div>
      <div class="app on"><svg class="ic i24"><use href="#green"/></svg></div>
    </div>
    <div class="tray tray-b">
      <div class="clock"><div>4:16 PM</div><div>10/18/2022</div></div>
    </div>
  </footer>
</div>
</body>
</html>
```

FILE: styles.css
```css
* { box-sizing: border-box; }
html, body { margin: 0; padding: 0; }
body {
  width: 2732px; height: 768px; overflow: hidden;
  display: grid; grid-template-columns: 1366px 1366px;
  font: 12px/16px Roboto, "Noto Sans", sans-serif; color: #222;
  background: #fff;
}
p, h2, h3, ul { margin: 0; padding: 0; }
.sprite { position: absolute; width: 0; height: 0; }
.ic { display: block; flex: none; }
.i7 { width: 7px; height: 5px; display: inline-block; margin-left: 2px; vertical-align: 1px; }
.i8 { width: 8px; height: 5px; }
.i9 { width: 9px; height: 9px; }
.i10 { width: 10px; height: 10px; }
.i11 { width: 11px; height: 11px; }
.i12 { width: 12px; height: 12px; }
.i14 { width: 14px; height: 16px; }
.i16 { width: 16px; height: 16px; }
.i18 { width: 18px; height: 18px; }
.i24 { width: 24px; height: 24px; }

.screen { position: relative; display: flex; flex-direction: column; height: 768px; overflow: hidden; }

/* ===== Edge ===== */
.browser { height: 720px; display: flex; flex-direction: column; background: #e6e6e6; flex: none; }
.tabstrip { height: 32px; display: flex; align-items: center; background: #e7e7e7; flex: none; }
.vt-ic { margin-left: 16px; }
.b-tab { width: 240px; height: 32px; margin-left: 15px; background: #f7f7f7; border-radius: 6px 6px 0 0; display: flex; align-items: center; padding-left: 13px; }
.i-file { width: 12px; height: 18px; }
.b-tab-title { margin-left: 12px; flex: 1; color: #333; }
.b-tab-x { margin-right: 12px; color: #222; }
.b-new { margin-left: 9px; }
.winctl { margin-left: auto; display: flex; align-items: center; padding-right: 17px; color: #888; }
.winctl > * { margin-left: 35px; }
.winctl > :first-child { margin-left: 0; }
.wc-min { width: 11px; height: 1px; background: currentColor; flex: none; }

.addr { height: 39px; display: flex; align-items: center; padding: 0 0 0 6px; background: #f7f7f7; border-bottom: 1px solid #c6c6c6; flex: none; }
.nav { width: 44px; display: flex; justify-content: center; }
.nav-on { color: #222; }
.nav-off { color: #ccc; }
.urlbox { width: 981px; height: 30px; margin-left: 6px; background: #fff; border-radius: 4px; display: flex; align-items: center; padding-left: 20px; }
.i-lock { width: 12px; height: 18px; }
.url { margin-left: 18px; font-size: 14.5px; color: #111; flex: 1; white-space: nowrap; }
.url-dim { color: #6b6b6b; }
.url-star { margin-right: 14px; }
.ab { width: 44px; display: flex; justify-content: center; }
.ab-ext { margin-left: 6px; }
.vsep { width: 1px; background: #c4c4c4; flex: none; }
.addr .vsep { height: 22px; margin-left: 2px; }
.ab-fav { margin-left: 2px; }
.ab-av { width: 42px; display: flex; justify-content: center; margin-left: 2px; }
.ab-more { width: 40px; height: 30px; margin-left: 6px; background: #d3d3d3; text-align: center; font: bold 15px/28px "Liberation Sans", sans-serif; color: #111; }

.pdfbar { height: 41px; display: flex; align-items: center; background: #f7f7f7; border-bottom: 1px solid #c6c6c6; flex: none; color: #333; white-space: nowrap; font-size: 14px; }
.pb-list { width: 52px; display: flex; justify-content: center; }
.pb-page { width: 40px; height: 32px; border: 1px solid #bbb; border-radius: 2px; text-align: center; line-height: 30px; background: #fff; }
.pb-of { margin-left: 10px; width: 28px; }
.pb-cell { width: 40px; height: 20px; display: flex; align-items: center; justify-content: center; }
.pb-find { margin-left: 1px; }
.pb-zoom { margin-left: 99px; }
.pb-minus { width: 15px; height: 2px; background: #777; }
.pdfbar .vsep { height: 21px; }
.tool { width: 20px; height: 20px; }
.sep-a { margin-left: 4px; }
.t-page { margin-left: 17px; }
.lbl-page { margin-left: 12px; width: 61px; color: #aaa; }
.sep-b { margin-left: 19px; }
.t-read { margin-left: 17px; }
.lbl-read { margin-left: 10px; width: 68px; }
.sep-c { margin-left: 20px; }
.t-add { margin-left: 17px; }
.lbl-add { margin-left: 10px; width: 52px; }
.sep-d { margin-left: 19px; }
.t-draw { margin-left: 18px; }
.lbl-draw { margin-left: 10px; width: 31px; }
.t-chev { margin-left: 17px; width: 10px; height: 6px; }
.t-high { margin-left: 23px; }
.lbl-high { margin-left: 12px; }

.viewer { flex: 1; display: flex; overflow: hidden; background: #e6e6e6; min-height: 0; }
.page { width: 793px; margin-left: 278px; background: #fff; box-shadow: 0 0 6px rgba(0,0,0,.35); font-family: "Liberation Sans", sans-serif; flex: none; height: 700px; }
.addrbox { margin-left: 59px; width: 721px; height: 92px; padding-left: 12px; background: #d3d2fd; color: #2e2d6c; font-size: 14.5px; line-height: 25.5px; }
.notes { margin: 26px 23px 0 46px; padding-bottom: 11px; border-bottom: 1px solid #eeeee8; font-size: 16px; font-weight: 400; line-height: 20px; color: #777; padding-left: 1px; }
.terms { margin: 27px 0 0 47px; font-size: 16px; line-height: 20px; color: #dcdcdc; }
.inv { margin: 32px 0 0 59px; width: 721px; table-layout: fixed; border-collapse: collapse; font-size: 16px; color: #111; }
.c1 { width: 344px; } .c2 { width: 113px; } .c3 { width: 118px; } .c4 { width: 146px; }
.inv th { height: 43px; background: #999; font-weight: 400; text-align: left; padding: 4px 0 0 8px; color: #111; }
.inv th.th-q { padding-left: 15px; }
.inv th.th-t { padding-left: 4px; }
.inv td { padding: 0 0 0 8px; border-bottom: 2px solid #999; }
.inv tbody tr > :first-child { border-left: 1px solid #999; }
.inv tbody tr > :last-child { border-right: 1px solid #999; }
.inv .qty { text-align: center; padding: 0 13px 0 0; }
.inv .tot { padding-left: 11px; }
.h40 { height: 40px; } .h41 { height: 41px; } .h42 { height: 42px; }
.alt td { background-color: #f3f3f3; }
.full td + td { background-image: linear-gradient(#999, #999); background-repeat: no-repeat; background-size: 1px 100%; background-position: left bottom; }
.cut td + td { background-image: linear-gradient(#999, #999); background-repeat: no-repeat; background-size: 1px calc(100% - 13px); background-position: left bottom; }
.inv .sub td { height: 47px; background: #d8d8d8; padding: 13px 68px 0 0; text-align: right; border-bottom: 0; vertical-align: top; }
.vscroll { width: 17px; margin-left: auto; background: #f3f3f3; display: flex; flex-direction: column; align-items: center; flex: none; padding-top: 99px; }
.vs-thumb { width: 13px; height: 339px; background: #c2c2c2; flex: none; }
.vs-down { margin-top: 156px; width: 0; height: 0; border: 4px solid transparent; border-top: 5px solid #555; border-bottom: 0; }

.popup { position: absolute; left: 1046px; top: 66px; width: 320px; height: 125px; background: #fff; border-radius: 4px; box-shadow: 0 2px 12px rgba(0,0,0,.35); padding: 17px 16px; font-size: 13px; }
.popup h3 { font-size: 14px; line-height: 18px; font-weight: 700; color: #000; }
.popup p { margin-top: 10px; line-height: 18px; color: #222; }
.popup-x { position: absolute; right: 10px; top: 10px; color: #555; }
.popup-act { margin-top: 14px; display: flex; justify-content: flex-end; }
.btn { width: 73px; height: 32px; background: #0078d4; color: #fff; border-radius: 2px; text-align: center; line-height: 32px; font-weight: 500; }

/* ===== Taskbar ===== */
.taskbar { height: 40px; flex: none; box-sizing: content-box; display: flex; background: linear-gradient(90deg, #e4f0f9 0, #d6e4f7 30%, #d4dff5 55%, #e2eef8 90%, #e6f0f9 100%); }
.taskbar.tall { padding-top: 8px; }
.weather { width: 452px; padding: 1px 0 0 20px; display: flex; flex: none; }
.i-rain { width: 24px; height: 26px; margin-top: 3px; }
.w-txt { margin-left: 7px; line-height: 16px; font-size: 12px; color: #222; }
.w-sub { color: #555; }
.apps { display: flex; }
.app { position: relative; width: 44.2px; padding-top: 5px; display: flex; flex-direction: column; align-items: flex-start; }
.app.on::after { content: ""; width: 6px; height: 3px; border-radius: 2px; background: #777; margin: 3px 0 0 9px; }
.app-badge { position: absolute; left: 13px; top: 0; width: 15px; height: 16px; }
.tray { margin-left: auto; display: flex; align-items: flex-start; padding-right: 20px; }
.tray > svg { margin-top: 10px; }
.tr-chev { width: 12px; height: 7px; color: #222; margin-top: 14px !important; margin-right: 12px; }
.tr-cloud { width: 18px; height: 13px; margin-top: 12px !important; margin-right: 7px; }
.tr-sync { width: 20px; height: 20px; margin-top: 6px !important; margin-right: 11px; }
.tr-eng { margin: 10px 16px 0 0; line-height: 16px; color: #333; }
.tr-wifi { width: 16px; height: 15px; margin-right: 8px; }
.tr-vol { width: 16px; height: 15px; margin-right: 9px; }
.tr-batt { width: 15px; height: 15px; margin-right: 8px; }
.clock { text-align: right; font-size: 12px; line-height: 16px; color: #333; }
.notif { width: 16px; height: 16px; margin: 8px 0 0 8px; border-radius: 50%; background: #0a70c8; color: #fff; text-align: center; font-size: 11px; line-height: 16px; }
.tray-b { padding-right: 18px; }

/* ===== Studio ===== */
.studio { height: 720px; display: flex; flex-direction: column; flex: none; background: #f5f7f7; }
.s-title { height: 30px; display: flex; background: #3481d3; color: #fff; flex: none; align-items: center; }
.s-menu { display: flex; height: 30px; }
.s-m { width: 72px; line-height: 33px; text-align: center; }
.s-m.active { background: #f8f8f8; color: #1a5fb0; }
.s-name { margin-left: 357px; padding-top: 2px; white-space: nowrap; font-size: 12.5px; color: #e8f0fa; }
.s-right { margin-left: auto; display: flex; align-items: center; color: #fff; padding-right: 16.5px; }
.i-feed { width: 16px; height: 18px; margin-left: 16px; }
.i-help { margin-left: 12px; }
.i-hchev { margin-left: 2px; width: 7px; }
.s-av { width: 22px; height: 22px; margin-left: 8px; border-radius: 50%; background: #fff; color: #222; text-align: center; line-height: 22px; font-size: 11px; }
.s-min { margin-left: 22px; }
.s-max, .s-close { margin-left: 33px; }

.ribbon { position: relative; height: 76px; padding: 4px 0 0 4px; display: flex; background: #fafafa; border-bottom: 2px solid #e0e2e2; flex: none; color: #999; }
.rg { display: flex; height: 69px; border-right: 1px solid #e2e2e2; flex: none; }
.g-file { padding-right: 7px; }
.rb { display: flex; flex-direction: column; align-items: center; padding-top: 4px; flex: none; text-align: center; }
.rb span { display: block; line-height: 13px; margin-top: 8px; white-space: nowrap; }
.rb .ic.i8 { margin-top: 3px; }
.rb.dark { color: #111; }
.r { width: 24px; height: 25px; }
.w32 { width: 32px; } .w36 { width: 36px; } .w44 { width: 44px; } .w46 { width: 46px; } .w56 { width: 56px; }
.w59 { width: 59px; } .w62 { width: 62px; } .w65 { width: 65px; } .w66 { width: 66px; } .w68 { width: 68px; }
.w69 { width: 69px; } .w72 { width: 72px; } .w74 { width: 74px; } .w75 { width: 75px; } .w80 { width: 80px; }
.stop { display: block; width: 24px; height: 24px; margin-top: 0 !important; margin-bottom: 1px; background: #1976d2; }
.g-edit { width: 133px; padding: 2px 0 0 13px; display: flex; }
.re-col { width: 57px; display: flex; flex-direction: column; gap: 2px; }
.re-col2 { width: 50px; }
.re { display: flex; align-items: center; height: 20px; white-space: nowrap; }
.i-r { width: 12px; height: 16px; margin-right: 6px; }
.i-r2 { width: 15px; height: 13px; margin-right: 4px; }
.g-rec { padding-right: 11px; }
.r-collapse { position: absolute; right: 7px; top: 65px; color: #333; height: 7px; }

.s-body { flex: 1; display: flex; min-height: 0; }
.rail { width: 32px; flex: none; padding-top: 5px; display: flex; flex-direction: column; align-items: center; gap: 12px; background: #f5f7f7; color: #333; }
.rail-i { display: flex; flex-direction: column; align-items: center; gap: 4px; }
.rail-i span { writing-mode: vertical-rl; line-height: 14px; white-space: nowrap; }
.rail-r { padding-top: 9px; }
.center { flex: 1; min-width: 0; padding-top: 5px; display: flex; flex-direction: column; }
.tabs { height: 24px; display: grid; grid-template-columns: 120px 141px 167px 175px 191px 173px 255px 1fr; border-bottom: 2px solid #1976d2; flex: none; white-space: nowrap; }
.tab { height: 22px; line-height: 24px; overflow: hidden; color: #333; }
.tab.active { background: #1976d2; color: #fff; display: flex; align-items: center; justify-content: space-between; padding: 0 6px 0 7px; }
.tab.second { padding-left: 8px; }
.tab.last { display: flex; align-items: center; gap: 9px; }
.crumb { height: 29px; background: #fff; border-bottom: 2px solid #e0e0e0; flex: none; display: flex; justify-content: space-between; align-items: center; padding: 3px 6px 0 7px; color: #333; }
.crumb-r { display: flex; gap: 11px; }
.canvas { position: relative; height: 290px; background: #fff; flex: none; display: flex; }
.flow { position: relative; flex: 1; height: 286px; overflow: hidden; }
.seq { position: absolute; left: 299px; top: 0; width: 687px; height: 300px; border: 1px solid #d2d2d2; border-radius: 2px 2px 0 0; }
.seq-h { height: 21px; background: #f4f6f6; border-bottom: 1px solid #d2d2d2; display: flex; align-items: center; padding-left: 3px; gap: 7px; color: #222; }
.seq-c { margin-left: auto; margin-right: 4px; }
.seq-d { padding: 8px 0 0 21px; line-height: 15px; color: #444; }
.edges { position: absolute; left: 0; top: 0; width: 1302px; height: 286px; }
.start { position: absolute; left: 387px; top: 108px; width: 59px; height: 75px; background: #fff; border: 1px solid #d8d8d8; border-radius: 3px; display: flex; flex-direction: column; align-items: center; padding-top: 10px; }
.play { width: 40px; height: 40px; }
.start span { margin-top: 5px; }
.init { position: absolute; left: 539px; top: 93px; width: 253px; height: 103px; background: #fff; border: 1px solid #d2d2d2; border-radius: 2px; display: flex; flex-direction: column; }
.init-h { height: 21px; background: #f4f6f6; border-bottom: 1px solid #d2d2d2; display: flex; align-items: center; padding-left: 2px; gap: 8px; flex: none; }
.init-b { padding: 7px 0 0 22px; line-height: 15px; color: #444; }
.init-f { margin-top: auto; display: flex; justify-content: space-between; align-items: flex-end; padding: 0 16px 6px 14px; }
.i-entry { width: 18px; height: 18px; }
.port { position: absolute; left: 120px; bottom: -4px; width: 10px; height: 10px; border-radius: 50%; background: #f5f5f5; border: 1px solid #d2d2d2; }
.pill { position: absolute; height: 18px; line-height: 16px; text-align: center; background: #fff; border: 1px solid #cfcfcf; border-radius: 9px; color: #333; white-space: nowrap; }
.pill-a { left: 490px; top: 216px; width: 83px; }
.pill-b { left: 632px; top: 252px; width: 64px; }
.cv-sb { position: absolute; right: 0; top: 0; bottom: 4px; width: 18px; padding: 2px 2px 0; display: flex; flex-direction: column; background: #fafafa; }
.cv-btn { height: 14px; border: 1px solid #d8d8d8; background: #fff; display: flex; align-items: center; justify-content: center; flex: none; }
.cv-thumb { margin-top: 9px; height: 80px; border: 1px solid #d8d8d8; background: #fff; flex: none; }
.cv-dn { margin-top: auto; }
.tri { width: 0; height: 0; display: block; border: 3px solid transparent; border-top: 4px solid #bbb; border-bottom: 0; }
.tri.up { transform: rotate(180deg); }
.varbar { height: 22px; background: #f1f1f1; border-bottom: 1px solid #ddd; display: flex; align-items: center; gap: 16px; padding-left: 7px; flex: none; color: #333; }
.varbar > span { margin-top: 3px; }
.var-r { margin-left: auto; display: flex; align-items: center; padding-right: 6px; }
.v-pct { margin-left: 14px; width: 50px; }
.v-zoom { margin-left: 9px; }
.v-dd { border-top-color: #222; border-width: 3px; border-top-width: 4px; border-bottom: 0; margin-right: 18px; }
.v-over { margin-left: 10px; }
.output { margin-top: 7px; height: 180px; background: #f9fafa; border: 1px solid #e2e2e2; display: flex; flex-direction: column; flex: none; }
.o-head { height: 24px; display: flex; align-items: center; padding: 0 9px 0 6px; flex: none; color: #222; }
.o-grip { flex: 1; height: 5px; margin: 0 6px 0 9px; background-image: radial-gradient(#aaa 40%, transparent 45%); background-size: 2px 2px; }
.o-chev { margin: 0 12px 0 5px; }
.o-pin { width: 8px; height: 13px; }
.o-filters { height: 24px; margin-top: 3px; display: flex; align-items: center; gap: 8px; padding-left: 12px; flex: none; }
.o-clock { margin-right: 4px; }
.o-f { height: 24px; background: #cfcfcf; display: flex; align-items: center; padding-left: 4px; gap: 2px; color: #333; }
.w31x { width: 31px; } .w32x { width: 32px; } .w33x { width: 33px; } .w37x { width: 37px; }
.i-olist { width: 20px; height: 16px; margin-left: 1px; }
.i-otrash { width: 14px; height: 18px; margin-left: 8px; }
.o-search { height: 24px; margin-top: 1px; border: 2px solid #e2e2e2; background: #fff; line-height: 24px; padding-left: 4px; color: #999; flex: none; }
.o-logs { flex: 1; display: flex; background: #fff; min-height: 0; }
.o-logs ul { flex: 1; list-style: none; padding-top: 0; }
.o-logs li { height: 19px; display: flex; align-items: center; gap: 6px; padding-left: 7px; color: #222; }
.o-logs li.err { color: #e8103c; }
.o-sb { width: 18px; background: #fbfbfb; display: flex; flex-direction: column; align-items: center; padding: 7px 0 4px; color: #555; }
.o-sb .ic { height: 7px; }
.o-thumb { width: 11px; height: 20px; margin-top: auto; margin-bottom: 5px; background: #dcdcdc; }
.btabs { flex: 1; display: flex; gap: 11px; padding-top: 9px; color: #555; }

.status { height: 24px; background: #1976d2; color: #fff; display: flex; align-items: center; padding-left: 838px; flex: none; white-space: nowrap; }
.status .i7 { margin-left: 5px; vertical-align: 0; }
.st-box { width: 10px; height: 12px; background: #5ea3e6; }
.st-dot { width: 8px; height: 8px; margin-left: 22px; border-radius: 50%; background: #4d8fd4; }
.st-ws { margin-left: 4px; }
.st-plus { width: 12px; height: 12px; margin: 0 4px 0 35px; background: linear-gradient(#8fc0ef, #8fc0ef) center/12px 3px no-repeat, linear-gradient(#8fc0ef, #8fc0ef) center/3px 12px no-repeat; }
.st-vb { margin-left: 15px; }
.blackbar { height: 8px; background: #000; flex: none; }
```
